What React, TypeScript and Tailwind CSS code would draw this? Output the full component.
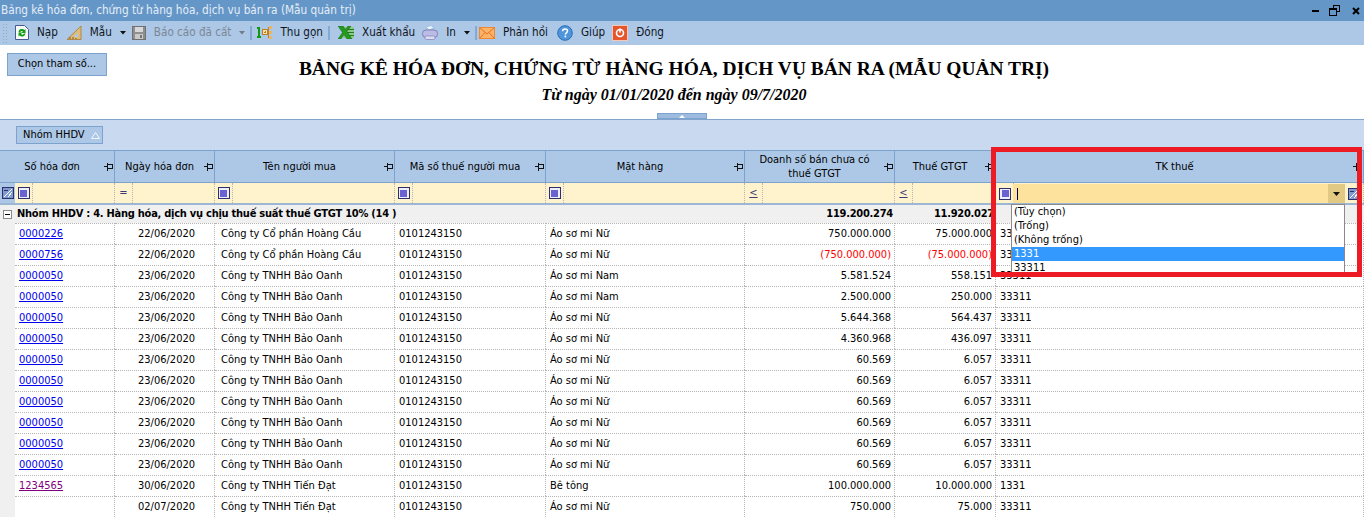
import type { ReactNode } from "react";

const GRID = "grid grid-cols-[15px_100px_100px_180px_151px_199px_150px_101px_368px]";

const rows = [
  ["0000226", "22/06/2020", "Công ty Cổ phần Hoàng Cầu", "0101243150", "Áo sơ mi Nữ", "750.000.000", "75.000.000", "33311"],
  ["0000756", "22/06/2020", "Công ty Cổ phần Hoàng Cầu", "0101243150", "Áo sơ mi Nữ", "(750.000.000)", "(75.000.000)", "33311"],
  ["0000050", "23/06/2020", "Công ty TNHH Bảo Oanh", "0101243150", "Áo sơ mi Nam", "5.581.524", "558.151", "33311"],
  ["0000050", "23/06/2020", "Công ty TNHH Bảo Oanh", "0101243150", "Áo sơ mi Nam", "2.500.000", "250.000", "33311"],
  ["0000050", "23/06/2020", "Công ty TNHH Bảo Oanh", "0101243150", "Áo sơ mi Nữ", "5.644.368", "564.437", "33311"],
  ["0000050", "23/06/2020", "Công ty TNHH Bảo Oanh", "0101243150", "Áo sơ mi Nữ", "4.360.968", "436.097", "33311"],
  ["0000050", "23/06/2020", "Công ty TNHH Bảo Oanh", "0101243150", "Áo sơ mi Nữ", "60.569", "6.057", "33311"],
  ["0000050", "23/06/2020", "Công ty TNHH Bảo Oanh", "0101243150", "Áo sơ mi Nữ", "60.569", "6.057", "33311"],
  ["0000050", "23/06/2020", "Công ty TNHH Bảo Oanh", "0101243150", "Áo sơ mi Nữ", "60.569", "6.057", "33311"],
  ["0000050", "23/06/2020", "Công ty TNHH Bảo Oanh", "0101243150", "Áo sơ mi Nữ", "60.569", "6.057", "33311"],
  ["0000050", "23/06/2020", "Công ty TNHH Bảo Oanh", "0101243150", "Áo sơ mi Nữ", "60.569", "6.057", "33311"],
  ["0000050", "23/06/2020", "Công ty TNHH Bảo Oanh", "0101243150", "Áo sơ mi Nữ", "60.569", "6.057", "33311"],
  ["1234565", "30/06/2020", "Công ty TNHH Tiến Đạt", "0101243150", "Bê tông", "100.000.000", "10.000.000", "1331"],
  ["", "02/07/2020", "Công ty TNHH Tiến Đạt", "0101243150", "Áo sơ mi Nữ", "750.000", "75.000", "33311"],
];

const headers = [
  "Số hóa đơn",
  "Ngày hóa đơn",
  "Tên người mua",
  "Mã số thuế người mua",
  "Mặt hàng",
  "Doanh số bán chưa có\nthuế GTGT",
  "Thuế GTGT",
  "TK thuế",
];

function Pin() {
  return (
    <svg width="9" height="9" viewBox="0 0 9 9" className="shrink-0" shapeRendering="crispEdges">
      <path d="M0 4.500h3M3.500 .500v8M3.500 2.500h5v4h-5z" stroke="#111" fill="none" />
    </svg>
  );
}

function HeaderCell({ label, first }: { label: string; first?: boolean }) {
  return (
    <div className={`flex items-center border-r border-[#7da2ce] bg-[#adc8e6] pr-[1px] ${first ? "col-span-2" : ""}`}>
      <span className="flex-1 whitespace-pre-line pt-[1px] text-center leading-[14px]">{label}</span>
      <Pin />
    </div>
  );
}

function SquareOp() {
  return (
    <span className="flex h-[12px] w-[12px] items-center justify-center border border-[#2f2f6b] bg-[#eeeefa]">
      <span className="h-[7px] w-[7px] bg-[#6a62d0]" />
    </span>
  );
}

function Clear() {
  return (
    <svg width="12" height="12" viewBox="0 0 12 12" shapeRendering="crispEdges">
      <rect x="0.500" y="0.500" width="11" height="11" fill="#7e9cd0" stroke="#2f2f6b" />
      <path d="M2 10L10 2M6 10L10 5" stroke="#fff" fill="none" />
      <path d="M2 3h4" stroke="#2f2f6b" fill="none" />
    </svg>
  );
}

function FilterCell({ op }: { op: "box" | "=" | "≤" }) {
  return (
    <div className="flex border-r border-dotted border-[#b5b5b5] bg-[#fff3cd]">
      <div className="flex w-[18px] items-center justify-center border-r border-dotted border-[#b5b5b5] text-[#3c3c78]">
        {op === "box" ? <SquareOp /> : <span className={op === "≤" ? "underline" : ""}>{op === "≤" ? "<" : "="}</span>}
      </div>
    </div>
  );
}

function Btn({ icon, label, disabled, caret, className = "" }: { icon: ReactNode; label: string; disabled?: boolean; caret?: boolean; className?: string }) {
  return (
    <div className={`flex items-center ${className}`}>
      {icon}
      <span className={`ml-[8px] ${disabled ? "text-[#7c8794]" : "text-[#10151c]"}`}>{label}</span>
      {caret && (
        <svg width="6" height="4" viewBox="0 0 6 4" className="ml-[8px]">
          <path d="M0 0h6L3 3.500z" fill={disabled ? "#6f7c8a" : "#111"} />
        </svg>
      )}
    </div>
  );
}

function Sep() {
  return <div className="mx-[-4px] h-[14px] w-[2px] bg-[#84a9d3]" />;
}

function NapIcon() {
  return (
    <svg width="14" height="15" viewBox="0 0 14 15">
      <path d="M.500.500h9l4 4v10h-13z" fill="#f8f9fd" stroke="#4a5a90" />
      <path d="M3.500 7a3.500 3.500 0 0 1 6-2l1-1v4h-4l1.500-1.500A2 2 0 0 0 5 7.500z" fill="#12a012" />
      <path d="M10.500 8.500a3.500 3.500 0 0 1-6 2l-1 1v-4h4L6 9a2 2 0 0 0 3-.500z" fill="#12a012" />
    </svg>
  );
}

function MauIcon() {
  return (
    <svg width="15" height="14" viewBox="0 0 15 14">
      <path d="M14 0v13.500H0z" fill="#e0bb76" stroke="#a97a2c" strokeWidth=".8" />
      <path d="M11 6.500V11H6.500z" fill="#adc8e6" />
      <path d="M3 13v-2M6 13v-2M9 13v-1" stroke="#7c5a1f" />
    </svg>
  );
}

function SaveIcon() {
  return (
    <svg width="14" height="14" viewBox="0 0 14 14" shapeRendering="crispEdges">
      <rect x=".500" y=".500" width="13" height="13" fill="#8f8f8f" stroke="#707070" />
      <rect x="3" y="1" width="8" height="5" fill="#d8d8d8" />
      <rect x="3" y="8" width="8" height="5" fill="#c9c9c9" />
      <rect x="8" y="9" width="2" height="3" fill="#777" />
    </svg>
  );
}

function CollapseIcon() {
  return (
    <svg width="15" height="15" viewBox="0 0 15 15" shapeRendering="crispEdges">
      <path d="M0 2h3v9h1v2H0v-2h1V4H0z" fill="#0f9a0f" />
      <rect x="5.500" y="4.500" width="5" height="5" fill="#f6dfa8" stroke="#b9822a" />
      <path d="M7 7h2M8 6v2" stroke="#b9822a" />
      <path d="M10 7h2" stroke="#b9822a" />
      <rect x="12" y="1" width="3" height="3" fill="#e7b765" />
      <rect x="12" y="6" width="3" height="3" fill="#e7b765" />
      <rect x="12" y="11" width="3" height="3" fill="#e7b765" />
      <path d="M12 2.500h-1v10h1" stroke="#b9822a" fill="none" />
    </svg>
  );
}

function ExcelIcon() {
  return (
    <svg width="16" height="13" viewBox="0 0 16 13">
      <path d="M5 1h11v11H5z" fill="#8fc98a" />
      <path d="M9 3.500h7M9 6.500h7M9 9.500h7" stroke="#1f7a28" />
      <path d="M0 0h5l2.500 3.500L10 0h3L9 5.500 14 13H9L6 8.500 3 13H0l4.500-6.500z" fill="#24991f" stroke="#146b1a" strokeWidth=".5" />
    </svg>
  );
}

function PrintIcon() {
  return (
    <svg width="16" height="15" viewBox="0 0 16 15">
      <path d="M4 2l5-1.500 3 2.500-5 2z" fill="#eaf4fb" stroke="#8db5d8" strokeWidth=".7" />
      <rect x=".500" y="5" width="15" height="7.500" rx="3.500" fill="#bcbbe6" stroke="#8080b8" />
      <rect x="3" y="11" width="10" height="3.500" rx="1.500" fill="#dcdcf2" stroke="#8080b8" strokeWidth=".7" />
    </svg>
  );
}

function MailIcon() {
  return (
    <svg width="16" height="12" viewBox="0 0 16 12">
      <rect x=".500" y=".500" width="15" height="11" fill="#fbb36a" stroke="#ef8a2c" />
      <path d="M.500.500L8 7l7.500-6.500M.500 11.500L6 5.500M15.500 11.500L10 5.500" stroke="#e8701a" fill="none" />
    </svg>
  );
}

function HelpIcon() {
  return (
    <svg width="16" height="16" viewBox="0 0 16 16">
      <circle cx="8" cy="8" r="7.300" fill="#4f95dc" stroke="#2b6cb3" />
      <path d="M5.600 6.300c0-1.600 1.200-2.300 2.500-2.300s2.400.8 2.400 2.100c0 1.700-2.100 1.700-2.100 3.300" fill="none" stroke="#fff" strokeWidth="1.500" />
      <rect x="7.500" y="10.600" width="1.700" height="1.700" fill="#fff" />
    </svg>
  );
}

function CloseIcon() {
  return (
    <svg width="16" height="16" viewBox="0 0 16 16">
      <rect x=".500" y=".500" width="15" height="15" fill="#e4572e" stroke="#f6c7b5" />
      <circle cx="8" cy="8" r="3.500" fill="none" stroke="#fff" strokeWidth="1.600" />
      <path d="M8 3.500v4" stroke="#fff" strokeWidth="1.600" />
    </svg>
  );
}

export default function App() {
  return (
    <div className="relative h-[526px] w-[1364px] overflow-hidden bg-white font-['DejaVu_Sans_Condensed','Liberation_Sans',sans-serif] text-[11px] text-black">
      <div className="flex h-[21px] items-center bg-[#6497c8] pl-[1px] pr-[4px] text-[#e6edf6]">
        <span className="flex-1 text-[11.7px]">Bảng kê hóa đơn, chứng từ hàng hóa, dịch vụ bán ra (Mẫu quản trị)</span>
        <div className="h-[2px] w-[7px] bg-black" />
        <svg width="11" height="11" viewBox="0 0 11 11" className="ml-[10px]" shapeRendering="crispEdges">
          <path d="M4 3V.500h6.500v6H8M.500 3.500h7v7h-7zM.500 4.500h7" fill="none" stroke="#000" />
        </svg>
        <svg width="8" height="8" viewBox="0 0 8 8" className="ml-[12px]">
          <path d="M1 1l6 6M7 1L1 7" stroke="#000" strokeWidth="2" />
        </svg>
      </div>

      <div className="flex h-[24px] items-center gap-[9px] bg-[#adc8e6] pl-[2px] text-[11.6px]">
        <div className="mr-[-2px] h-[20px] w-[6px] bg-[radial-gradient(#8ea7c2_1px,transparent_1px)] bg-[length:3px_3px]" />
        <Btn icon={<NapIcon />} label="Nạp" />
        <Btn icon={<MauIcon />} label="Mẫu" caret />
        <Btn icon={<SaveIcon />} label="Báo cáo đã cất" disabled caret className="ml-[-3px]" />
        <Sep />
        <Btn icon={<CollapseIcon />} label="Thu gọn" />
        <Sep />
        <Btn icon={<ExcelIcon />} label="Xuất khẩu" className="ml-[3px]" />
        <Btn icon={<PrintIcon />} label="In" caret className="ml-[-2px]" />
        <Sep />
        <Btn icon={<MailIcon />} label="Phản hồi" className="ml-[-3px]" />
        <Btn icon={<HelpIcon />} label="Giúp" />
        <Btn icon={<CloseIcon />} label="Đóng" className="ml-[-2px]" />
      </div>

      <div className="relative flex h-[75px] border-b border-[#82a3cc] pl-[7px] pt-[8px]">
        <div className="flex h-[23px] w-[100px] items-center justify-center border border-[#7da2ce] bg-[#adc8e6]">Chọn tham số...</div>
        <div className="flex-1 pr-[123px] text-center font-['Liberation_Serif',serif] text-black">
          <div className="mt-[5px] text-[19.45px] font-bold leading-[22px]">BẢNG KÊ HÓA ĐƠN, CHỨNG TỪ HÀNG HÓA, DỊCH VỤ BÁN RA (MẪU QUẢN TRỊ)</div>
          <div className="mt-[6px] text-[16px] font-bold italic leading-[18px]">Từ ngày 01/01/2020 đến ngày 09/7/2020</div>
        </div>
        <div className="absolute bottom-0 left-[657px] flex h-[6px] w-[50px] items-center justify-center border border-[#7da2ce] bg-[#9dbbde]">
          <svg width="6" height="3" viewBox="0 0 6 3">
            <path d="M0 3L3 0l3 3z" fill="#fff" />
          </svg>
        </div>
      </div>

      <div className="flex h-[30px] items-start bg-[#c9daf0] pl-[16px] pt-[6px]">
        <div className="flex h-[18px] w-[87px] items-center gap-[6px] border border-[#7da2ce] bg-[#adc8e6] pl-[6px]">
          Nhóm HHDV
          <svg width="9" height="7" viewBox="0 0 9 7">
            <path d="M4.500.500L8.500 6.500H.500z" fill="none" stroke="#f2f5fb" />
          </svg>
        </div>
      </div>

      <div className={`${GRID} h-[33px] border-y border-[#7da2ce]`}>
        {headers.map((h, i) => (
          <HeaderCell key={h} label={h} first={i === 0} />
        ))}
      </div>

      <div className={`${GRID} h-[22px] border-b-2 border-[#9db6d3]`}>
        <div className="flex items-center justify-center bg-[#adc8e6]">
          <Clear />
        </div>
        <FilterCell op="box" />
        <FilterCell op="=" />
        <FilterCell op="box" />
        <FilterCell op="box" />
        <FilterCell op="box" />
        <FilterCell op="≤" />
        <FilterCell op="≤" />
        <FilterCell op="box" />
      </div>

      <div className="flex h-[18px] items-center bg-[#f0f0f0] font-bold tracking-[-0.25px] text-black">
        <div className="flex w-[15px] items-center justify-center">
          <span className="flex h-[9px] w-[9px] items-center justify-center border border-[#8a8a8a] bg-white">
            <span className="h-[1px] w-[5px] bg-black" />
          </span>
        </div>
        <span className="ml-[2px] w-[726px]">Nhóm HHDV : 4. Hàng hóa, dịch vụ chịu thuế suất thuế GTGT 10% (14 )</span>
        <span className="w-[150px] text-right">119.200.274</span>
        <span className="w-[101px] text-right">11.920.027</span>
      </div>

      {rows.map((r, i) => (
        <div key={i} className={`${GRID} h-[21px]`}>
          <div className="bg-[#f0f0f0]" />
          {r.map((c, j) => (
            <div
              key={j}
              className={`flex items-center border-r border-t border-dotted border-[#b5b5b5] pt-[1px] ${j === 2 ? "pl-[6px]" : "pl-[4px]"} ${j === 1 ? "justify-center" : ""} ${j === 5 || j === 6 ? "justify-end pr-[3px]" : ""} ${(j === 5 || j === 6) && c.startsWith("(") ? "text-[#f00]" : ""}`}
            >
              {j === 0 ? <span className={`underline ${c === "1234565" ? "text-[#800080]" : "text-[#0000ee]"}`}>{c}</span> : c}
            </div>
          ))}
        </div>
      ))}

      {/* bộ lọc cột TK thuế đang mở, nằm đè lên lưới */}
      <div className="absolute left-[997px] top-[184px] flex h-[19px] w-[365px] items-center bg-[#fff3cd]">
        <div className="flex w-[16px] justify-center">
          <SquareOp />
        </div>
        <div className="flex h-full w-[332px] items-center bg-[#fce29c] pl-[4px]">
          <span className="h-[12px] w-[1px] bg-[#000060]" />
          <div className="ml-auto flex h-full w-[17px] items-center justify-center bg-[#e2c983]">
            <svg width="7" height="4" viewBox="0 0 7 4">
              <path d="M0 0h7L3.500 4z" fill="#111" />
            </svg>
          </div>
        </div>
        <div className="ml-[3px]">
          <Clear />
        </div>
      </div>
      <div className="absolute left-[1011px] top-[204px] h-[70px] w-[334px] border-x border-t border-[#8a8a8a] bg-white leading-[14px]">
        <div className="pl-[2px]">(Tùy chọn)</div>
        <div className="pl-[2px]">(Trống)</div>
        <div className="pl-[2px]">(Không trống)</div>
        <div className="bg-[#3399ff] pl-[2px] text-white">1331</div>
        <div className="pl-[2px]">33311</div>
      </div>
      <div className="absolute left-[991px] top-[147px] h-[130px] w-[371px] border-[5px] border-[#ed1c24]" />
    </div>
  );
}
